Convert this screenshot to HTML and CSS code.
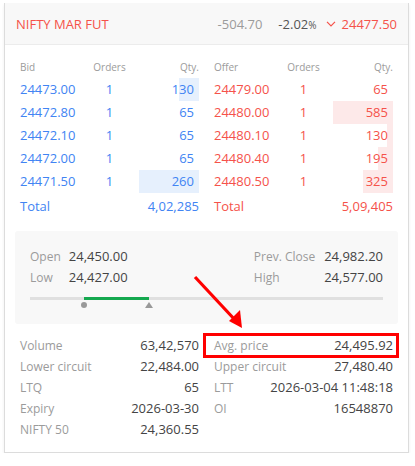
FILE: index.html
```html
<!DOCTYPE html>
<html>
<head>
<meta charset="utf-8">
<link rel="stylesheet" href="styles.css">
</head>
<body>
<div class="card">
  <div class="head">
    <span class="name">NIFTY MAR FUT</span>
    <div class="quote">
      <span class="chg">-504.70</span>
      <span class="pct">-2.02<small>%</small></span>
      <svg class="chev" width="10" height="6" viewBox="0 0 10 6"><path d="M1 0.8 L5 4.8 L9 0.8" fill="none" stroke="#f5524a" stroke-width="1.2"/></svg>
      <span class="ltp">24477.50</span>
    </div>
  </div>

  <div class="depth">
    <div class="side bids">
      <div class="row hdr"><span>Bid</span><span class="c">Orders</span><span class="r">Qty.</span></div>
      <div class="row"><span>24473.00</span><span class="c">1</span><span class="r qty" style="--w:20px">130</span></div>
      <div class="row"><span>24472.80</span><span class="c">1</span><span class="r qty" style="--w:0px">65</span></div>
      <div class="row"><span>24472.10</span><span class="c">1</span><span class="r qty" style="--w:0px">65</span></div>
      <div class="row"><span>24472.00</span><span class="c">1</span><span class="r qty" style="--w:0px">65</span></div>
      <div class="row"><span>24471.50</span><span class="c">1</span><span class="r qty" style="--w:60px">260</span></div>
      <div class="row total"><span>Total</span><span></span><span class="r">4,02,285</span></div>
    </div>
    <div class="side offers">
      <div class="row hdr"><span>Offer</span><span class="c">Orders</span><span class="r">Qty.</span></div>
      <div class="row"><span>24479.00</span><span class="c">1</span><span class="r qty" style="--w:0px">65</span></div>
      <div class="row"><span>24480.00</span><span class="c">1</span><span class="r qty" style="--w:60px">585</span></div>
      <div class="row"><span>24480.10</span><span class="c">1</span><span class="r qty" style="--w:6px">130</span></div>
      <div class="row"><span>24480.40</span><span class="c">1</span><span class="r qty" style="--w:15px">195</span></div>
      <div class="row"><span>24480.50</span><span class="c">1</span><span class="r qty" style="--w:30px">325</span></div>
      <div class="row total"><span>Total</span><span></span><span class="r">5,09,405</span></div>
    </div>
  </div>

  <div class="ohlc">
    <div class="ohlc-rows">
      <div class="grp left">
        <span class="lbl">Open</span><span class="val">24,450.00</span>
        <span class="lbl">Low</span><span class="val">24,427.00</span>
      </div>
      <div class="grp right">
        <span class="lbl">Prev. Close</span><span class="val">24,982.20</span>
        <span class="lbl">High</span><span class="val">24,577.00</span>
      </div>
    </div>
    <div class="range">
      <div class="fill" style="left:15.3%;width:18.4%"></div>
      <span class="mk-low" style="left:15.3%"></span>
      <span class="mk-ltp" style="left:33.7%"></span>
    </div>
  </div>

  <div class="info">
    <div class="cell"><span class="lbl">Volume</span><span class="val">63,42,570</span></div>
    <div class="cell hl"><span class="lbl">Avg. price</span><span class="val">24,495.92</span></div>
    <div class="cell"><span class="lbl">Lower circuit</span><span class="val">22,484.00</span></div>
    <div class="cell"><span class="lbl">Upper circuit</span><span class="val">27,480.40</span></div>
    <div class="cell"><span class="lbl">LTQ</span><span class="val">65</span></div>
    <div class="cell"><span class="lbl">LTT</span><span class="val">2026-03-04 11:48:18</span></div>
    <div class="cell"><span class="lbl">Expiry</span><span class="val">2026-03-30</span></div>
    <div class="cell"><span class="lbl">OI</span><span class="val">16548870</span></div>
    <div class="cell"><span class="lbl">NIFTY 50</span><span class="val">24,360.55</span></div>
  </div>

  <svg class="arrow" width="403" height="450" viewBox="0 0 403 450">
    <line x1="190" y1="274" x2="231" y2="318" stroke="#f00" stroke-width="3.2"/>
    <polygon points="237,325 224,318 235,307" fill="#f00"/>
  </svg>
</div>
</body>
</html>
```

FILE: styles.css
```css
body {
  margin: 0;
  background: #fff;
  font-family: "Open Sans", "Noto Sans", sans-serif;
  color: #444;
}

.card {
  position: relative;
  margin: 3px 0 0 4px;
  width: 405px;
  box-sizing: border-box;
  border: 1px solid #dcdcdc;
  border-top: none;
  box-shadow: 0 2px 3px rgba(0, 0, 0, 0.07);
  padding-bottom: 12px;
}

.head {
  height: 41px;
  background: #f8f8f8;
  border-bottom: 1px solid #ececec;
  display: flex;
  align-items: center;
  justify-content: space-between;
  padding: 0 11px;
  font-size: 13px;
}

.name {
  color: #f5524a;
}

.quote {
  display: flex;
  align-items: center;
}

.chg {
  color: #9b9b9b;
  margin-right: 16px;
}

.pct {
  color: #555;
  margin-right: 9px;
}

.pct small {
  font-size: 10px;
}

.chev {
  margin-right: 6px;
  margin-top: 1px;
}

.ltp {
  color: #f5524a;
}

.depth {
  display: grid;
  grid-template-columns: 1fr 1fr;
  column-gap: 15px;
  padding: 11px 15px 0;
}

.row {
  display: grid;
  grid-template-columns: 1fr 1fr 1fr;
  height: 23px;
  line-height: 23px;
  font-size: 13px;
}

.row .c {
  text-align: center;
}

.row .r {
  text-align: right;
}

.row .qty {
  padding-right: 5px;
}

.bids .row {
  color: #4184f3;
}

.offers .row {
  color: #f5524a;
}

.bids .qty {
  background: linear-gradient(to left, #e6f0fd var(--w), transparent var(--w));
}

.offers .qty {
  background: linear-gradient(to left, #fde9e9 var(--w), transparent var(--w));
}

.row.hdr {
  height: 22px;
  line-height: 22px;
  font-size: 10px;
}

.bids .row.hdr,
.offers .row.hdr {
  color: #9b9b9b;
}

.row.total {
  height: 27px;
  line-height: 27px;
}

.ohlc {
  margin: 11px 10px 0;
  background: #f8f8f8;
  border-radius: 3px;
  padding: 15px 15px 24px;
}

.ohlc-rows {
  display: flex;
  justify-content: space-between;
}

.grp {
  display: grid;
  grid-template-columns: auto auto;
  grid-auto-rows: 21px;
  line-height: 21px;
  align-items: center;
}

.grp.left {
  column-gap: 8px;
}

.grp.right {
  column-gap: 9px;
}

.grp.right .val {
  text-align: right;
}

.lbl {
  font-size: 12px;
  color: #9b9b9b;
}

.val {
  font-size: 13px;
  color: #444;
}

.range {
  position: relative;
  margin-top: 9px;
  height: 3px;
  background: #e0e0e0;
}

.range .fill {
  position: absolute;
  top: 0;
  height: 3px;
  background: #14a84f;
}

.mk-low {
  position: absolute;
  top: 5px;
  width: 6px;
  height: 6px;
  margin-left: -3px;
  border-radius: 50%;
  background: #999;
}

.mk-ltp {
  position: absolute;
  top: 5px;
  margin-left: -4px;
  width: 0;
  height: 0;
  border-left: 4px solid transparent;
  border-right: 4px solid transparent;
  border-bottom: 6px solid #999;
}

.info {
  display: grid;
  grid-template-columns: 1fr 1fr;
  column-gap: 15px;
  padding: 11px 15px 0;
}

.cell {
  display: flex;
  justify-content: space-between;
  align-items: center;
  height: 21px;
  line-height: 21px;
}

.cell.hl {
  position: relative;
}

.cell.hl::after {
  content: "";
  position: absolute;
  left: -11px;
  right: -6px;
  top: -2px;
  bottom: -2px;
  border: 3px solid #f00;
}

.arrow {
  position: absolute;
  left: 0;
  top: 0;
  pointer-events: none;
}
```
